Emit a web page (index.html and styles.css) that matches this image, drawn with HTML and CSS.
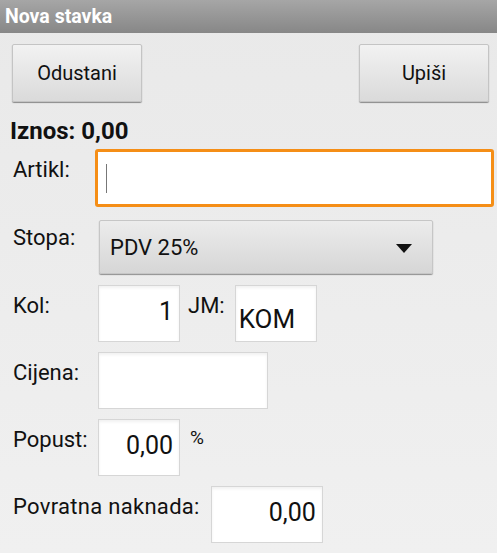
FILE: index.html
```html
<!DOCTYPE html>
<html lang="hr">
<head>
    <meta charset="UTF-8">
    <meta name="viewport" content="width=device-width, initial-scale=1.0">
    <title>Nova stavka</title>
    <link rel="stylesheet" href="styles.css">
</head>
<body>
    <header class="title-bar">Nova stavka</header>
    <main class="form">
        <div class="actions">
            <button class="btn">Odustani</button>
            <button class="btn">Upiši</button>
        </div>
        <div class="total">Iznos: 0,00</div>

        <div class="row row-artikl">
            <label class="label">Artikl:</label>
            <div class="field field-focus"><span class="caret"></span></div>
        </div>

        <div class="row row-stopa">
            <label class="label">Stopa:</label>
            <div class="spinner">
                <span>PDV 25%</span>
                <svg class="arrow" width="16" height="9" viewBox="0 0 16 9"><path d="M0 0 H16 L8 9 Z" fill="#111"/></svg>
            </div>
        </div>

        <div class="row row-kol">
            <label class="label">Kol:</label>
            <div class="box box-small num">1</div>
            <label class="label label-jm">JM:</label>
            <div class="box box-small unit">KOM</div>
        </div>

        <div class="row">
            <label class="label">Cijena:</label>
            <div class="box box-wide"></div>
        </div>

        <div class="row">
            <label class="label">Popust:</label>
            <div class="box box-small num">0,00</div>
            <span class="percent">%</span>
        </div>

        <div class="row">
            <label class="label label-auto">Povratna naknada:</label>
            <div class="box box-mid num">0,00</div>
        </div>
    </main>
</body>
</html>
```

FILE: styles.css
```css
body {
    margin: 0;
    font-family: Roboto, "Noto Sans", sans-serif;
    background: linear-gradient(#e9e9e9, #f0f0f0);
    color: #111;
    height: 553px;
    overflow: hidden;
}

.title-bar {
    height: 33px;
    line-height: 33px;
    padding-left: 5px;
    font-size: 19.5px;
    font-weight: bold;
    color: #fff;
    background: linear-gradient(#a6a6a6, #878787);
}

.form {
    padding: 11px 8px 0 13px;
}

.actions {
    display: flex;
    justify-content: space-between;
}

.btn {
    width: 130px;
    height: 58px;
    margin-left: -1px;
    font-family: inherit;
    font-size: 20px;
    color: #111;
    background: linear-gradient(#f2f2f2, #dadada);
    border: 1px solid #c4c4c4;
    border-radius: 2px;
    box-shadow: 0 1px 1px #8a8a8a;
}

.total {
    margin: 15px 0 0 -3px;
    font-size: 24px;
    font-weight: bold;
    line-height: 28px;
}

.row {
    display: flex;
    align-items: flex-start;
    margin-top: 10px;
}

.row-artikl {
    margin-top: 4px;
}

.label {
    font-size: 22px;
    line-height: 24px;
    padding-top: 9px;
    width: 83px;
    flex-shrink: 0;
    white-space: nowrap;
}

.label-auto {
    width: auto;
    letter-spacing: 0.3px;
    margin-right: 9px;
}

.field {
    flex: 1;
    height: 52px;
    background: #fff;
    box-sizing: content-box;
}

.field-focus {
    border: 3px solid #f58e16;
    border-radius: 3px;
    margin: 0 -5px 0 -1px;
    padding-left: 8px;
    display: flex;
    align-items: center;
}

.caret {
    width: 1px;
    height: 29px;
    background: #777;
}

.spinner {
    width: 334px;
    height: 54px;
    margin-left: 3px;
    margin-top: 3px;
    display: flex;
    align-items: center;
    justify-content: space-between;
    padding: 0 20px 0 10px;
    box-sizing: border-box;
    font-size: 22px;
    background: linear-gradient(#ececec, #d6d6d6);
    border: 1px solid #c6c6c6;
    border-radius: 2px;
    box-shadow: 0 1px 1px #909090;
}

.arrow {
    margin-top: 2px;
}

.box {
    height: 57px;
    box-sizing: border-box;
    background: #fff;
    border: 1px solid #d6d6d6;
    box-shadow: inset 0 2px 3px rgba(0, 0, 0, 0.06);
    margin-left: 2px;
    font-size: 25px;
}

.row-kol {
    margin-top: 11px;
}

.box-small {
    width: 82px;
}

.box-wide {
    width: 170px;
}

.box-mid {
    width: 112px;
}

.num {
    text-align: right;
    padding: 11px 6px 0 0;
}

.label-jm {
    width: auto;
    margin-left: 8px;
    margin-right: 8px;
}

.unit {
    padding: 18px 0 0 3px;
    font-size: 26px;
}

.percent {
    font-size: 19px;
    margin: 7px 0 0 10px;
}
```
